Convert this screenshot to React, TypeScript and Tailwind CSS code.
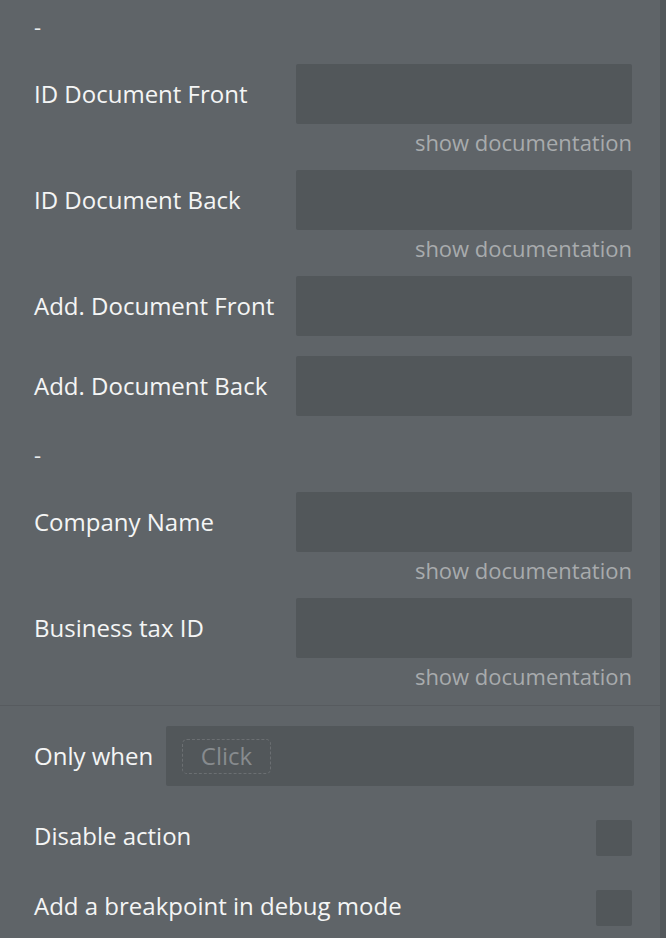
import React from "react";

type Field = { label: string; doc?: boolean };

const idFields: Field[] = [
  { label: "ID Document Front", doc: true },
  { label: "ID Document Back", doc: true },
  { label: "Add. Document Front" },
  { label: "Add. Document Back" },
];

const companyFields: Field[] = [
  { label: "Company Name", doc: true },
  { label: "Business tax ID", doc: true },
];

function Separator() {
  return (
    <div className="h-[56px] text-[22px] leading-[36px] text-[#e9eaeb]">-</div>
  );
}

function FieldRow({ field, last }: { field: Field; last: boolean }) {
  return (
    <div className={!field.doc && !last ? "mb-[20px]" : ""}>
      <div className="flex items-center">
        <span className="text-[24px] text-[#f4f5f5]">{field.label}</span>
        <div className="ml-auto h-[60px] w-[336px] rounded-[2px] bg-[#52575a]" />
      </div>
      {field.doc && (
        <div className="h-[46px] text-right text-[22px] leading-[36px] text-[#a8abad]">
          show documentation
        </div>
      )}
    </div>
  );
}

export default function App() {
  return (
    <div
      className="flex h-[938px] w-[666px] bg-[#5f6468]"
      style={{ fontFamily: '"Open Sans", "Liberation Sans", sans-serif' }}
    >
      <div className="flex-1 pt-[8px]">
        <div className="pl-[34px] pr-[28px]">
          <Separator />
          {idFields.map((f, i) => (
            <FieldRow key={f.label} field={f} last={i === idFields.length - 1} />
          ))}
          <div className="h-[20px]" />
          <Separator />
          {companyFields.map((f, i) => (
            <FieldRow key={f.label} field={f} last={i === companyFields.length - 1} />
          ))}
        </div>
        <div className="mt-[1px] h-[1px] bg-[#575b5f]" />
        <div className="pl-[34px] pr-[26px] pt-[20px] text-[24px]">
          <div className="flex items-center">
            <span className="text-[#f4f5f5]">Only when</span>
            <div className="ml-auto flex h-[60px] w-[468px] items-center rounded-[2px] bg-[#52575a] pl-[16px]">
              <div className="flex h-[35px] w-[89px] items-center justify-center rounded-[5px] border border-dashed border-[#6b6f72] text-[#878b8e]">
                Click
              </div>
            </div>
          </div>
          <div className="mt-[34px] flex h-[36px] items-center pr-[2px]">
            <span className="pb-[4px] text-[#f4f5f5]">Disable action</span>
            <div className="ml-auto h-[36px] w-[36px] rounded-[2px] bg-[#52575a]" />
          </div>
          <div className="mt-[34px] flex h-[36px] items-center pr-[2px]">
            <span className="pb-[4px] text-[#f4f5f5]">Add a breakpoint in debug mode</span>
            <div className="ml-auto h-[36px] w-[36px] rounded-[2px] bg-[#52575a]" />
          </div>
        </div>
      </div>
      <div className="w-[6px] bg-[#53585b]" />
    </div>
  );
}
